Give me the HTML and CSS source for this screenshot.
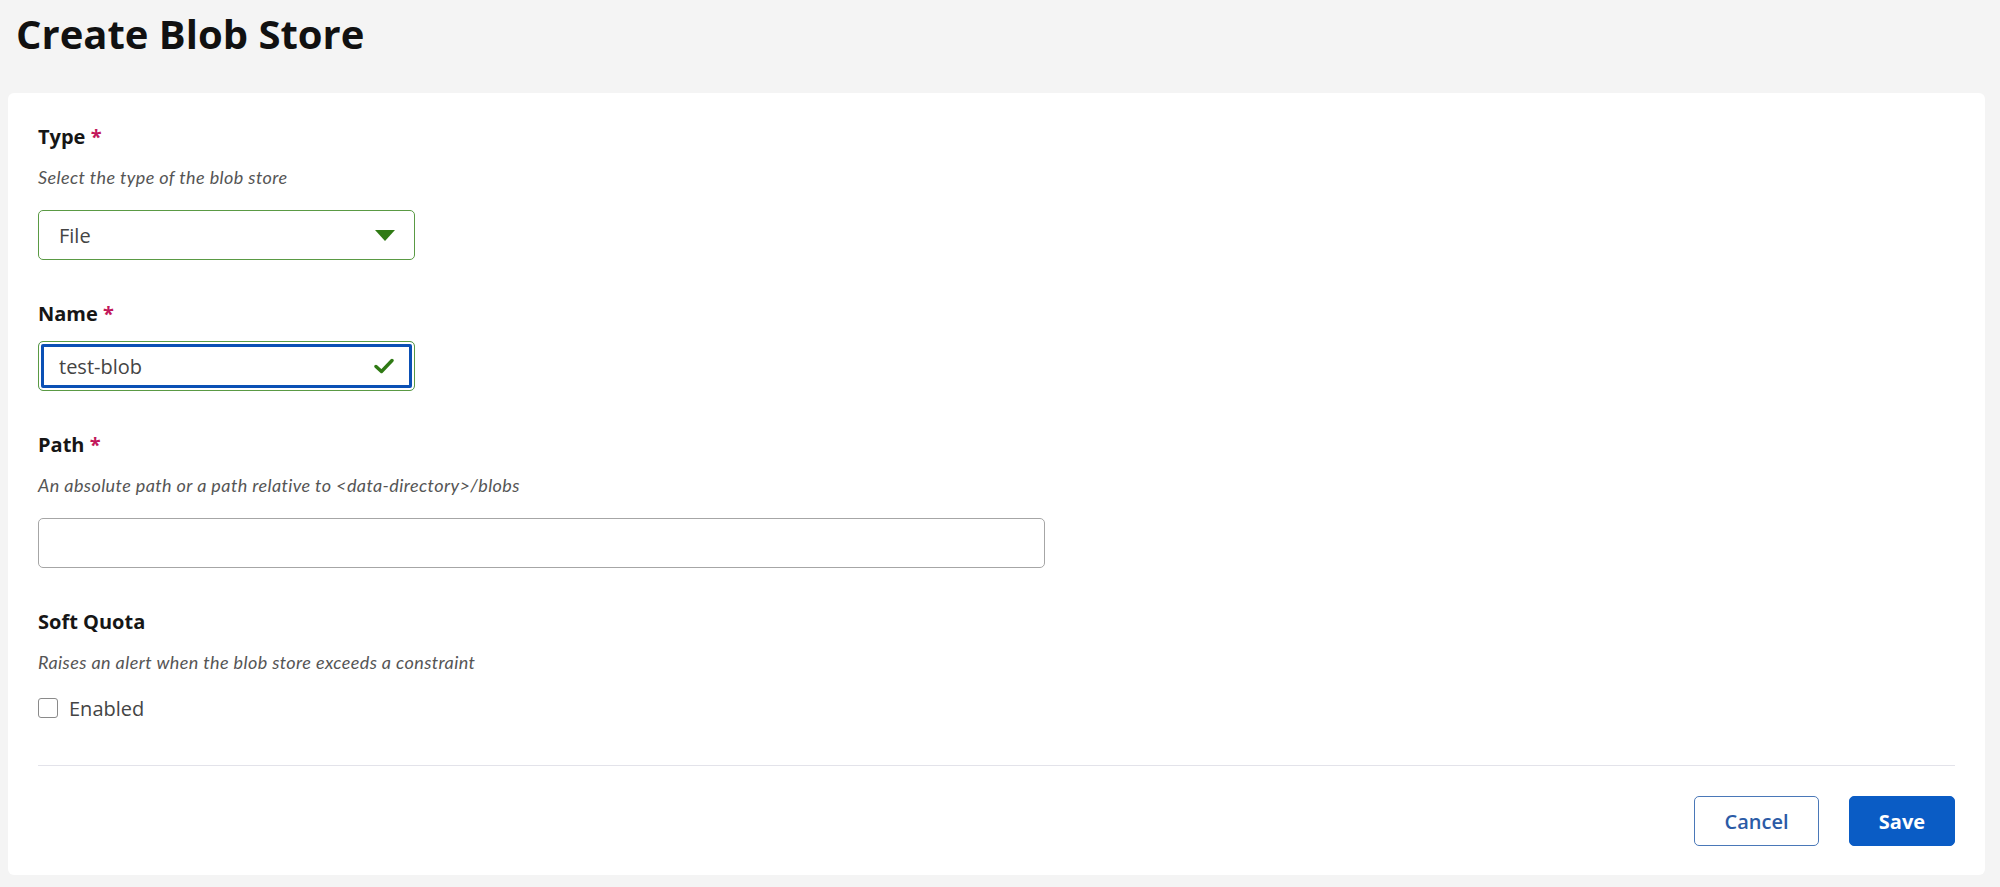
FILE: index.html
```html
<!DOCTYPE html>
<html lang="en">
<head>
    <meta charset="UTF-8">
    <title>Create Blob Store</title>
    <link rel="stylesheet" href="styles.css">
</head>
<body>
    <div class="page">
        <h1 class="page-title">Create Blob Store</h1>

        <form class="card">
            <!-- type -->
            <div class="field">
                <label class="field-label">Type <span class="req">*</span></label>
                <p class="field-help">Select the type of the blob store</p>
                <div class="select valid">
                    <span>File</span>
                    <svg class="select-arrow" width="20" height="11" viewBox="0 0 20 11">
                        <path d="M0 0 H20 L10 11 Z" fill="#2f7a14"/>
                    </svg>
                </div>
            </div>

            <!-- name -->
            <div class="field">
                <label class="field-label">Name <span class="req">*</span></label>
                <div class="input valid focused">
                    <span class="input-value">test-blob</span>
                    <svg class="input-check" width="20" height="16" viewBox="0 0 20 16">
                        <path d="M2 8.5 L7.5 13.5 L18 2.5" fill="none" stroke="#2f7a14" stroke-width="3.4" stroke-linecap="round" stroke-linejoin="round"/>
                    </svg>
                </div>
            </div>

            <!-- path -->
            <div class="field">
                <label class="field-label">Path <span class="req">*</span></label>
                <p class="field-help">An absolute path or a path relative to &lt;data-directory&gt;/blobs</p>
                <div class="input wide"></div>
            </div>

            <!-- soft quota -->
            <div class="field">
                <label class="field-label">Soft Quota</label>
                <p class="field-help">Raises an alert when the blob store exceeds a constraint</p>
                <label class="checkbox">
                    <span class="checkbox-box"></span>
                    <span>Enabled</span>
                </label>
            </div>

            <div class="card-footer">
                <button type="button" class="btn btn-secondary">Cancel</button>
                <button type="button" class="btn btn-primary">Save</button>
            </div>
        </form>
    </div>
</body>
</html>
```

FILE: styles.css
```css
* {
    margin: 0px;
    padding: 0px;
    box-sizing: border-box;
}
html, body {
    height: 100%;
}
body {
    background-color: #f4f4f4;
    font-family: "Open Sans", "Liberation Sans", sans-serif;
    color: #1a1a1a;
}
.page {
    padding: 6px 15px 10px 8px;
}
.page-title {
    font-size: 40px;
    font-weight: 700;
    line-height: 56px;
    color: #111111;
    padding-left: 8px;
    margin-bottom: 31px;
}
.card {
    background-color: white;
    border-radius: 6px;
    padding: 30px 30px 29px 30px;
}
.field {
    margin-bottom: 40px;
}
.field-label {
    display: block;
    font-size: 20px;
    font-weight: 700;
    line-height: 28px;
    color: #161616;
}
.req {
    color: #c2185b;
}
.field-help {
    font-family: Lato, "Open Sans", sans-serif;
    font-style: italic;
    font-size: 18px;
    letter-spacing: 0.4px;
    line-height: 20px;
    color: #555555;
    margin-top: 16px;
    margin-bottom: 23px;
}
.select, .input {
    display: flex;
    align-items: center;
    justify-content: space-between;
    width: 377px;
    height: 50px;
    padding: 0px 20px;
    border: 1px solid #999999;
    border-radius: 5px;
    font-size: 20px;
    color: #444444;
}
.valid {
    border-color: #5a9a44;
}
.select-arrow {
    margin-right: -1px;
}
.focused {
    margin-top: 13px;
    box-shadow: inset 0px 0px 0px 2px white, inset 0px 0px 0px 5px #0b50b5;
}
.input.wide {
    width: 1007px;
    border-color: #a6a6a6;
}
.checkbox {
    display: flex;
    align-items: center;
    gap: 11px;
    font-size: 20px;
    color: #444444;
    height: 26px;
    margin-top: 2px;
}
.checkbox-box {
    width: 20px;
    height: 20px;
    border: 1px solid #8a8a8a;
    border-radius: 3px;
}
.card-footer {
    border-top: 1px solid #e3e3ea;
    margin-top: 44px;
    padding-top: 30px;
    display: flex;
    justify-content: flex-end;
    gap: 30px;
}
.btn {
    height: 50px;
    border-radius: 5px;
    font-family: "Open Sans", sans-serif;
    font-size: 20px;
    font-weight: 600;
    cursor: pointer;
}
.btn-secondary {
    width: 125px;
    background-color: white;
    border: 1px solid #4a78b8;
    color: #2b5ba6;
}
.btn-primary {
    width: 106px;
    background-color: #0a5cc5;
    border: 1px solid #0a5cc5;
    color: white;
    font-weight: 700;
}
```
